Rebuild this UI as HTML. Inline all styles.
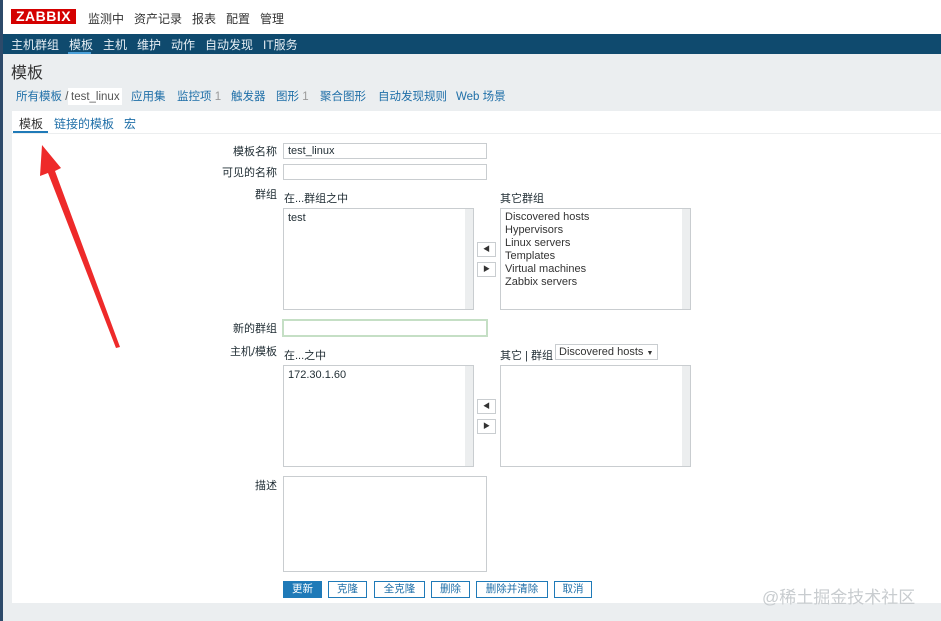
<!DOCTYPE html>
<html><head><meta charset="utf-8"><style>
*{margin:0;padding:0;box-sizing:border-box}
body{width:941px;height:621px;overflow:hidden;background:#ebeef0;font-family:"Liberation Sans","Noto Sans CJK SC",sans-serif;font-size:11px;color:#1f2c33;position:relative}
.a{position:absolute;white-space:nowrap}
.lnk{color:#1f6fa8}
.bc{position:absolute;top:89px;height:16px;line-height:16px;font-size:11.5px;color:#1f6fa8;white-space:nowrap}
.inp{position:absolute;background:#fff;border:1px solid #c9cdd0;height:16px}
.lb{position:absolute;background:#fff;border:1px solid #c9cdd0}
.lb:after{content:"";position:absolute;right:0;top:0;bottom:0;width:8px;background:#eceeef}
.ab{position:absolute;width:19px;height:15px;border:1px solid #c9cdd0;background:#fff;font-size:7px;text-align:center;line-height:13px;color:#333}
.btn{position:absolute;top:581px;height:17px;border:1px solid #1f7ab8;background:#fff;color:#1f6fa8;font-size:10.5px;line-height:15px;text-align:center}
</style></head><body>
<div class="a" style="left:0;top:0;width:941px;height:34px;background:#fff"></div>
<div class="a" style="left:0;top:0;width:3px;height:621px;background:#2d4a6a"></div>
<div class="a" style="left:11px;top:9px;width:65px;height:15px;background:#d40000;color:#fff;font-weight:bold;font-size:14px;line-height:15px;text-align:center;letter-spacing:0.5px">ZABBIX</div>
<div class="a" style="left:88px;top:10px;font-size:12px;color:#333">监测中&nbsp;&nbsp;&nbsp;资产记录&nbsp;&nbsp;&nbsp;报表&nbsp;&nbsp;&nbsp;配置&nbsp;&nbsp;&nbsp;管理</div>
<div class="a" style="left:3px;top:34px;width:938px;height:20px;background:#0f4a6e"></div>
<div class="a" style="left:11px;top:36px;font-size:12px;color:#e6eef4">主机群组&nbsp;&nbsp;&nbsp;模板&nbsp;&nbsp;&nbsp;主机&nbsp;&nbsp;&nbsp;维护&nbsp;&nbsp;&nbsp;动作&nbsp;&nbsp;&nbsp;自动发现&nbsp;&nbsp;&nbsp;IT服务</div>
<div class="a" style="left:68px;top:52px;width:23px;height:2px;background:#4a9fd8"></div>
<div class="a" style="left:11px;top:59px;font-size:16px;color:#333">模板</div>
<div class="a" style="left:68px;top:88px;width:54px;height:17px;background:#fff"></div>
<div class="bc" style="left:16px">所有模板 <span style="color:#555">/</span></div>
<div class="bc" style="left:71px;color:#555">test_linux</div>
<div class="bc" style="left:131px">应用集</div>
<div class="bc" style="left:177px">监控项 <span style="color:#999">1</span></div>
<div class="bc" style="left:231px">触发器</div>
<div class="bc" style="left:276px">图形 <span style="color:#999">1</span></div>
<div class="bc" style="left:320px">聚合图形</div>
<div class="bc" style="left:378px">自动发现规则</div>
<div class="bc" style="left:456px">Web 场景</div>
<div class="a" style="left:12px;top:111px;width:929px;height:492px;background:#fff"></div>
<div class="a" style="left:19px;top:115px;font-size:12px;color:#333">模板</div>
<div class="a lnk" style="left:54px;top:115px;font-size:12px">链接的模板&nbsp;&nbsp;&nbsp;宏</div>
<div class="a" style="left:13px;top:131px;width:35px;height:2px;background:#1f7ab8"></div>
<div class="a" style="left:12px;top:133px;width:929px;height:1px;background:#eceeef"></div>

<div class="a" style="right:664px;top:143px">模板名称</div>
<div class="inp" style="left:283px;top:143px;width:204px;padding-left:4px;line-height:14px">test_linux</div>
<div class="a" style="right:664px;top:164px">可见的名称</div>
<div class="inp" style="left:283px;top:164px;width:204px"></div>
<div class="a" style="right:664px;top:186px">群组</div>
<div class="a" style="left:284px;top:190px">在...群组之中</div>
<div class="a" style="left:500px;top:190px">其它群组</div>
<div class="lb" style="left:283px;top:208px;width:191px;height:102px;padding:3px 4px">test</div>
<div class="lb" style="left:500px;top:208px;width:191px;height:102px;padding:2px 4px;line-height:13px;color:#333">Discovered hosts<br>Hypervisors<br>Linux servers<br>Templates<br>Virtual machines<br>Zabbix servers</div>
<div class="ab" style="left:477px;top:242px">◀</div>
<div class="ab" style="left:477px;top:262px">▶</div>
<div class="a" style="right:664px;top:320px">新的群组</div>
<div class="inp" style="left:282px;top:319px;width:206px;height:18px;border:2px solid #c5dfc5"></div>
<div class="a" style="right:664px;top:343px">主机/模板</div>
<div class="a" style="left:284px;top:347px">在...之中</div>
<div class="a" style="left:500px;top:347px">其它 | 群组</div>
<div class="inp" style="left:555px;top:344px;width:103px;padding-left:3px;line-height:14px;color:#333">Discovered hosts <span style="font-size:7px">▼</span></div>
<div class="lb" style="left:283px;top:365px;width:191px;height:102px;padding:3px 4px">172.30.1.60</div>
<div class="lb" style="left:500px;top:365px;width:191px;height:102px"></div>
<div class="ab" style="left:477px;top:399px">◀</div>
<div class="ab" style="left:477px;top:419px">▶</div>
<div class="a" style="right:664px;top:477px">描述</div>
<div class="inp" style="left:283px;top:476px;width:204px;height:96px"></div>

<div class="btn" style="left:283px;width:39px;background:#1f7ab8;color:#fff">更新</div>
<div class="btn" style="left:328px;width:39px">克隆</div>
<div class="btn" style="left:374px;width:51px">全克隆</div>
<div class="btn" style="left:431px;width:39px">删除</div>
<div class="btn" style="left:476px;width:72px">删除并清除</div>
<div class="btn" style="left:554px;width:38px">取消</div>
<div class="a" style="left:762px;top:583px;font-size:17px;color:#c8cccf">@稀土掘金技术社区</div>

<svg class="a" style="left:0;top:0" width="941" height="621"><polygon points="42,145 61,168 55,171 120,347 116,348 48,173 40,176" fill="#ee2a2a"/></svg>
</body></html>
